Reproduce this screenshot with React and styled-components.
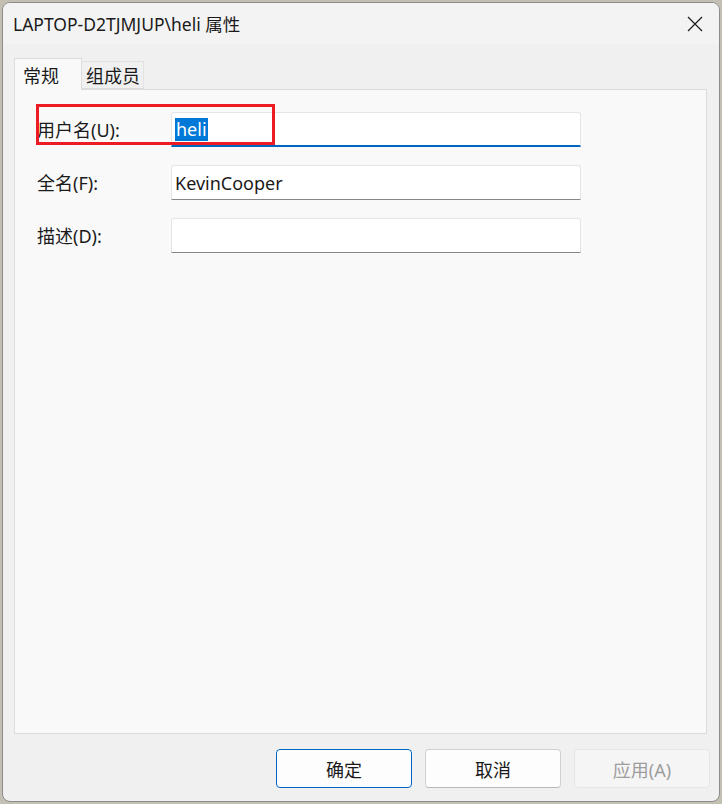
import React from 'react';
import styled, { createGlobalStyle } from 'styled-components';

const GlobalStyle = createGlobalStyle`
  html, body {
    margin: 0;
    padding: 0;
    background: #c4bfb3;
    width: 722px;
    height: 804px;
    overflow: hidden;
  }
  * { box-sizing: border-box; }
`;

const font = `"Noto Sans", "Noto Sans CJK SC", "Liberation Sans", sans-serif`;

const Window = styled.div`
  margin: 2px 0 0 2px;
  width: 718px;
  height: 800px;
  background: #f0f0f0;
  border: 1px solid #8c8c8c;
  border-radius: 8px;
  overflow: hidden;
  display: flex;
  flex-direction: column;
  font-family: ${font};
  color: #1a1a1a;
  position: relative;
`;

const TitleBar = styled.div`
  height: 41px;
  flex: none;
  background: #f3f3f3;
  display: flex;
  align-items: center;
  justify-content: space-between;
  padding: 0 14px 0 10px;
  font-size: 17.5px;
`;

const CloseBtn = styled.div`
  width: 20px;
  height: 20px;
  display: flex;
  align-items: center;
  justify-content: center;
`;

const Body = styled.div`
  flex: 1;
  display: flex;
  flex-direction: column;
  padding: 14px 12px 12px 11px;
`;

const TabRow = styled.div`
  display: flex;
  align-items: flex-end;
  height: 31px;
  position: relative;
  z-index: 1;
`;

const Tab = styled.div`
  height: ${p => (p.$active ? '32px' : '28px')};
  padding: 0 ${p => (p.$active ? '22px' : '3px')} 0 ${p => (p.$active ? '8px' : '4px')};
  display: flex;
  align-items: center;
  font-size: 18px;
  background: ${p => (p.$active ? '#f9f9f9' : '#f0f0f0')};
  border: 1px solid ${p => (p.$active ? '#dcdcdc' : '#e2e2e2')};
  border-bottom: ${p => (p.$active ? 'none' : '1px solid #dcdcdc')};
  margin-bottom: ${p => (p.$active ? '-1px' : '0')};
  ${p => (p.$active ? '' : 'border-left: none;')}
`;

const Panel = styled.div`
  height: 645px;
  background: #f9f9f9;
  border: 1px solid #dcdcdc;
  padding: 22px 0 0 22px;
  position: relative;
`;

const Form = styled.div`
  display: grid;
  grid-template-columns: 134px 410px;
  row-gap: 18px;
  align-items: center;
`;

const Label = styled.div`
  font-size: 18px;
  line-height: 20px;
`;

const Field = styled.div`
  height: 35px;
  background: #ffffff;
  border: 1px solid #e5e5e5;
  border-bottom: ${p => (p.$focus ? '2px solid #0067c0' : '1px solid #868686')};
  border-radius: 3px 3px 0 0;
  display: flex;
  align-items: center;
  padding-left: 3px;
  font-size: 18px;
`;

const Selected = styled.span`
  background: #0078d7;
  color: #ffffff;
  line-height: 23px;
  padding: 0 1px;
`;

const Highlight = styled.div`
  position: absolute;
  left: 21px;
  top: 14px;
  width: 239px;
  height: 41px;
  border: 3px solid #ed1c24;
  pointer-events: none;
`;

const Footer = styled.div`
  display: flex;
  justify-content: flex-end;
  gap: 13px;
  margin-top: 15px;
  margin-right: -3px;
`;

const Button = styled.div`
  width: 136px;
  height: 39px;
  border-radius: 4px;
  display: flex;
  align-items: center;
  justify-content: center;
  font-size: 18px;
  background: ${p => (p.$disabled ? '#f5f5f5' : '#fdfdfd')};
  color: ${p => (p.$disabled ? '#9d9d9d' : '#1a1a1a')};
  border: 1px solid ${p => (p.$primary ? '#0067c0' : p.$disabled ? '#e6e6e6' : '#d1d1d1')};
  ${p => (!p.$primary && !p.$disabled ? 'border-bottom-color: #bababa;' : '')}
`;

export default function App() {
  return (
    <>
      <GlobalStyle />
      <Window>
        <TitleBar>
          <span>LAPTOP-D2TJMJUP\heli 属性</span>
          <CloseBtn>
            <svg width="16" height="16" viewBox="0 0 16 16">
              <path d="M1 1 L15 15 M15 1 L1 15" stroke="#1a1a1a" strokeWidth="1.2" fill="none" />
            </svg>
          </CloseBtn>
        </TitleBar>
        <Body>
          <TabRow>
            <Tab $active>常规</Tab>
            <Tab>组成员</Tab>
          </TabRow>
          <Panel>
            <Form>
              <Label>用户名(U):</Label>
              <Field $focus><Selected>heli</Selected></Field>
              <Label>全名(F):</Label>
              <Field>KevinCooper</Field>
              <Label>描述(D):</Label>
              <Field />
            </Form>
            <Highlight />
          </Panel>
          <Footer>
            <Button $primary>确定</Button>
            <Button>取消</Button>
            <Button $disabled>应用(A)</Button>
          </Footer>
        </Body>
      </Window>
    </>
  );
}
